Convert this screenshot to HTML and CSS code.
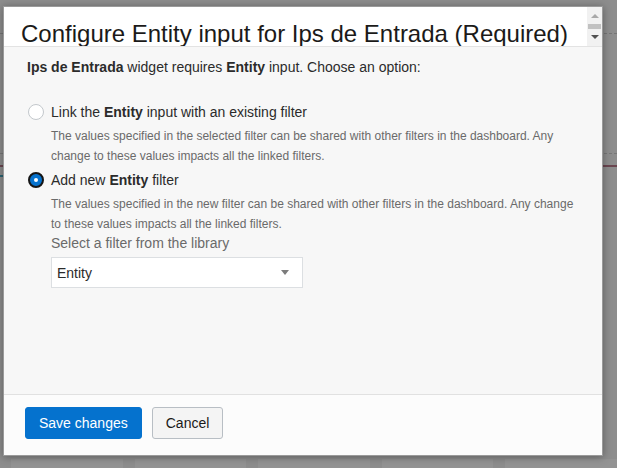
FILE: index.html
```html
<!DOCTYPE html>
<html lang="en">
<head>
<meta charset="utf-8">
<title>Configure Entity input</title>
<link rel="stylesheet" href="styles.css">
</head>
<body>
<div class="bg">
  <div class="bg-dash1"></div>
  <div class="bg-dash2"></div>
  <div class="bg-maroon"></div>
  <div class="bg-teal"></div>
  <div class="bg-cards">
    <div class="bg-card"></div>
    <div class="bg-card"></div>
    <div class="bg-card"></div>
    <div class="bg-card"></div>
    <div class="bg-card"></div>
  </div>
</div>

<div class="modal" role="dialog">
  <div class="modal-header">
    <h1 class="title">Configure Entity input for Ips de Entrada (Required)</h1>
    <div class="scrollbar">
      <span class="sb-up"></span>
      <span class="sb-thumb"></span>
      <span class="sb-down"></span>
    </div>
  </div>

  <div class="modal-body">
    <p class="intro"><b>Ips de Entrada</b> widget requires <b>Entity</b> input. Choose an option:</p>

    <div class="options">
      <div class="option">
        <div class="option-label"><span class="radio"></span><span>Link the <b>Entity</b> input with an existing filter</span></div>
        <div class="option-body">
          <p class="desc">The values specified in the selected filter can be shared with other filters in the dashboard. Any change to these values impacts all the linked filters.</p>
        </div>
      </div>

      <div class="option option-second">
        <div class="option-label"><span class="radio checked"></span><span>Add new <b>Entity</b> filter</span></div>
        <div class="option-body">
          <p class="desc">The values specified in the new filter can be shared with other filters in the dashboard. Any change to these values impacts all the linked filters.</p>
          <div class="select-label">Select a filter from the library</div>
          <div class="select"><span>Entity</span><span class="caret"></span></div>
        </div>
      </div>
    </div>
  </div>

  <div class="modal-footer">
    <button class="btn btn-primary">Save changes</button>
    <button class="btn btn-secondary">Cancel</button>
  </div>
</div>
</body>
</html>
```

FILE: styles.css
```css
* { box-sizing: border-box; }

html, body {
  margin: 0;
  padding: 0;
  width: 617px;
  height: 468px;
  overflow: hidden;
}

body {
  background: #8d8d8d;
  font-family: "Liberation Sans", Arial, sans-serif;
  color: #333;
  position: relative;
}

/* dimmed page behind the dialog */
.bg-dash1 { margin-top: 33px; border-top: 1px dashed #757575; }
.bg-dash2 { margin-top: 119px; border-top: 1px dashed #777; }
.bg-maroon { margin-top: 11px; height: 2px; background: #6b4650; }
.bg-teal { margin-top: 8px; height: 2px; width: 6px; background: #2b6473; }
.bg-cards {
  margin-top: 282px;
  display: flex;
  gap: 12px;
  padding-left: 11px;
}
.bg-card { width: 117px; height: 20px; background: #939393; }

/* dialog */
.modal {
  position: absolute;
  left: 3px;
  top: 6px;
  width: 600px;
  height: 450px;
  border: 1px solid #9a9a9a;
  background: #f7f7f7;
  display: flex;
  flex-direction: column;
  box-shadow: 0 1px 8px rgba(0, 0, 0, 0.35);
}

.modal-header {
  height: 40px;
  flex: none;
  display: flex;
  background: #fff;
  border-bottom: 1px solid #e3e3e3;
  overflow: hidden;
}

.title {
  flex: 1;
  margin: 0;
  padding: 13px 0 0 17px;
  font-size: 24px;
  line-height: 28px;
  font-weight: normal;
  color: #1b1a19;
  white-space: nowrap;
}

.scrollbar {
  width: 15px;
  flex: none;
  background: #f1f1f1;
  display: flex;
  flex-direction: column;
  align-items: center;
  padding-top: 7px;
}
.sb-up {
  width: 0; height: 0;
  border-left: 4px solid transparent;
  border-right: 4px solid transparent;
  border-bottom: 4px solid #a8a8a8;
}
.sb-thumb {
  margin-top: 6px;
  width: 13px;
  height: 5px;
  background: #c1c1c1;
}
.sb-down {
  margin-top: 6px;
  width: 0; height: 0;
  border-left: 4px solid transparent;
  border-right: 4px solid transparent;
  border-top: 4px solid #505050;
}

.modal-body {
  flex: 1;
  padding: 10px 23px 0 23px;
  background: #f7f7f7;
}

.intro {
  margin: 0;
  font-size: 14px;
  line-height: 20px;
  color: #2b2b2b;
}

.options { margin-top: 25px; }
.option-second { margin-top: 4px; }

.option-label {
  display: flex;
  align-items: center;
  font-size: 14px;
  line-height: 20px;
  color: #2b2b2b;
}

.radio {
  width: 16px;
  height: 16px;
  margin: 0 7px 0 1px;
  border-radius: 50%;
  border: 1px solid #c3c8cc;
  background: #fff;
  display: flex;
  align-items: center;
  justify-content: center;
  flex: none;
}
.radio.checked {
  border: 2px solid #161616;
  background: #0572ce;
}
.radio.checked::after {
  content: "";
  width: 4px;
  height: 4px;
  border-radius: 50%;
  background: #fff;
}

.option-body { margin-left: 24px; }

.desc {
  margin: 4px 0 0;
  font-size: 12px;
  line-height: 20px;
  color: #6a6a6a;
}

.select-label {
  margin-top: -1px;
  font-size: 14px;
  line-height: 20px;
  color: #6a6a6a;
}

.select {
  margin-top: 4px;
  width: 252px;
  height: 31px;
  border: 1px solid #dcdfe2;
  background: #fff;
  display: flex;
  align-items: center;
  justify-content: space-between;
  padding: 0 13px 0 5px;
  font-size: 14px;
  color: #2b2b2b;
}
.caret {
  width: 0; height: 0;
  border-left: 4px solid transparent;
  border-right: 4px solid transparent;
  border-top: 5px solid #7c7c7c;
}

.modal-footer {
  flex: none;
  height: 61px;
  border-top: 1px solid #e1e1e1;
  background: #fcfcfc;
  display: flex;
  align-items: flex-start;
  gap: 10px;
  padding: 12px 0 0 21px;
}

.btn {
  height: 32px;
  padding: 0 13px;
  border-radius: 3px;
  font-family: "Liberation Sans", Arial, sans-serif;
  font-size: 14px;
  line-height: 30px;
  cursor: pointer;
}
.btn-primary {
  background: #0572ce;
  border: 1px solid #0572ce;
  color: #fff;
}
.btn-secondary {
  background: #f4f4f4;
  border: 1px solid #b8bec4;
  color: #1b1a19;
}
```
